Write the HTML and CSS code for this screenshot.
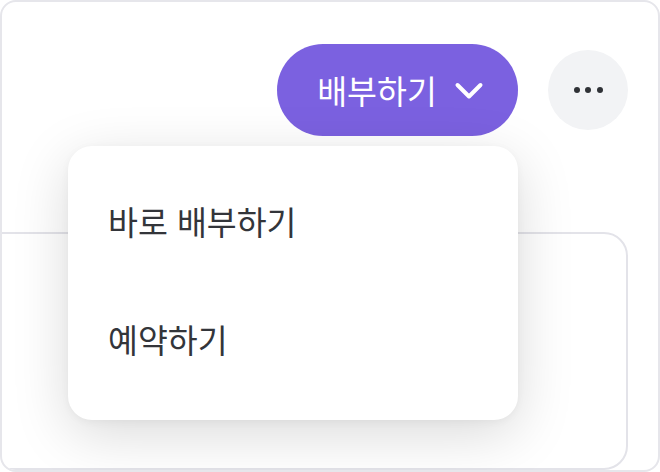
FILE: index.html
```html
<!DOCTYPE html>
<html lang="ko">
<head>
<meta charset="utf-8">
<link rel="stylesheet" href="styles.css">
</head>
<body>
<div class="frame">
  <div class="header">
    <div class="dropdown">
      <button class="primary">
        <span>배부하기</span>
        <svg class="chev" width="30" height="18" viewBox="0 0 30 18"><path d="M3.5 3 L15 14.5 L26.5 3" fill="none" stroke="#fff" stroke-width="4" stroke-linecap="round" stroke-linejoin="round"/></svg>
      </button>
      <div class="menu">
        <div class="item">바로 배부하기</div>
        <div class="item">예약하기</div>
      </div>
    </div>
    <button class="more" aria-label="더보기">
      <span class="dot"></span><span class="dot"></span><span class="dot"></span>
    </button>
  </div>
  <div class="panel"></div>
</div>
</body>
</html>
```
FILE: styles.css
```css
* { box-sizing: border-box; }
html, body { margin: 0; padding: 0; background: #fff; }
body { font-family: "Noto Sans CJK KR", "Noto Sans", sans-serif; }
.frame {
  width: 660px;
  height: 472px;
  border: 2px solid #e6e6eb;
  border-radius: 16px;
  overflow: hidden;
  background: #fff;
  display: flex;
  flex-direction: column;
}
.header {
  display: flex;
  justify-content: flex-end;
  align-items: flex-start;
  gap: 30px;
  padding: 42px 30px 0 0;
  height: 230px;
}
.dropdown { position: relative; }
.primary {
  height: 92px;
  width: 241px;
  border: none;
  border-radius: 46px;
  background: #7b61e0;
  color: #fff;
  font-family: inherit;
  font-size: 32.5px;
  font-weight: 400;
  display: flex;
  align-items: center;
  justify-content: center;
  gap: 17px;
  padding: 0 0 0 6px;
}
.primary span { line-height: 1; }
.chev { display: block; margin-top: 2px; }
.more {
  margin-top: 6px;
  width: 80px;
  height: 80px;
  border-radius: 50%;
  border: none;
  background: #f2f3f5;
  display: flex;
  align-items: center;
  justify-content: center;
  gap: 5.5px;
  padding: 0;
}
.dot { width: 6px; height: 6px; border-radius: 50%; background: #2f3136; }
.menu {
  position: absolute;
  right: 0;
  top: 102px;
  width: 450px;
  height: 274px;
  background: #fff;
  border-radius: 24px;
  box-shadow: 0 14px 56px rgba(0,0,0,0.15), 0 2px 8px rgba(0,0,0,0.04);
  padding: 16px 0 22px;
  z-index: 2;
}
.item {
  height: 118px;
  display: flex;
  align-items: center;
  padding-left: 40px;
  font-size: 32.5px;
  color: #33353a;
  line-height: 1;
}
.panel {
  flex: 1;
  margin: 0 30px 0 -30px;
  border: 2px solid #e3e3e9;
  border-radius: 24px;
}
```
